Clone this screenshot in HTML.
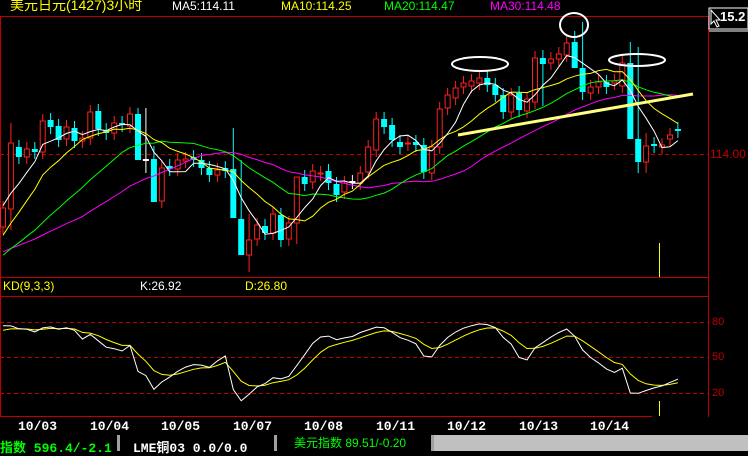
<!DOCTYPE html>
<html><head><meta charset="utf-8"><style>
html,body{margin:0;padding:0;background:#000;}
body{width:748px;height:451px;overflow:hidden;position:relative;font-family:"Liberation Sans","Noto Sans CJK SC",sans-serif;}
.t{position:absolute;font-size:11px;white-space:nowrap;line-height:13px;}
.d{position:absolute;top:419px;font:bold 13px "Liberation Mono",monospace;color:#fff;}
</style></head><body>
<svg id="s" width="748" height="451" style="position:absolute;left:0;top:0">
<rect x="0" y="0" width="748" height="451" fill="#000"/>
<line x1="0.5" y1="16" x2="0.5" y2="417" stroke="#c00000"/>
<line x1="0" y1="16.5" x2="708" y2="16.5" stroke="#c00000"/>
<line x1="708.5" y1="16" x2="708.5" y2="417" stroke="#c00000"/>
<line x1="0" y1="277.5" x2="708" y2="277.5" stroke="#c00000"/>
<line x1="0" y1="296.5" x2="708" y2="296.5" stroke="#c00000"/>
<line x1="0" y1="416.5" x2="652" y2="416.5" stroke="#c00000"/>
<line x1="0" y1="154.5" x2="708" y2="154.5" stroke="#c00000" stroke-dasharray="4,3"/>
<line x1="0" y1="322.5" x2="708" y2="322.5" stroke="#c00000" stroke-dasharray="4,3"/>
<line x1="0" y1="357.5" x2="708" y2="357.5" stroke="#c00000" stroke-dasharray="4,3"/>
<line x1="0" y1="393.5" x2="708" y2="393.5" stroke="#c00000" stroke-dasharray="4,3"/>
<rect x="659" y="243" width="1" height="34" fill="#ffff00"/>
<rect x="659" y="401" width="1" height="15" fill="#ffff00"/>
<g id="g"></g>
<line x1="458" y1="135" x2="693" y2="94" stroke="#ffff80" stroke-width="3"/>
<ellipse cx="480" cy="64" rx="28" ry="7" fill="none" stroke="#fff" stroke-width="2"/>
<ellipse cx="574" cy="25" rx="14" ry="12" fill="none" stroke="#fff" stroke-width="2"/>
<ellipse cx="637" cy="60" rx="28" ry="6" fill="none" stroke="#fff" stroke-width="2"/>
<rect x="709" y="8" width="39" height="21" fill="#000" stroke="#fff"/>
<line x1="709" y1="31" x2="748" y2="31" stroke="#fff"/>
<path d="M711 10 L711 24 L714 21 L717 27 L719 26 L716 20 L720 20 Z" fill="#000" stroke="#fff"/>
<rect x="0" y="435" width="748" height="16" fill="#000"/>
<rect x="117" y="435" width="3" height="16" fill="#a0a0a0"/>
<rect x="274" y="435" width="3" height="16" fill="#a0a0a0"/>
<rect x="431" y="435" width="3" height="16" fill="#a0a0a0"/>
<rect x="434" y="435" width="314" height="16" fill="#c0c0c0"/>
</svg>
<div class="t" style="left:10px;top:-3px;color:#ffff00;font-size:14px;line-height:16px">美元日元(1427)3小时</div>
<div class="t" style="left:172px;top:0px;color:#fff;font-size:12px">MA5:114.11</div>
<div class="t" style="left:281px;top:0px;color:#ffff00;font-size:12px">MA10:114.25</div>
<div class="t" style="left:384px;top:0px;color:#00ff00;font-size:12px">MA20:114.47</div>
<div class="t" style="left:490px;top:0px;color:#ff00ff;font-size:12px">MA30:114.48</div>
<div class="t" style="left:720px;top:10px;color:#fff;font-weight:bold;font-size:13px">15.2</div>
<div class="t" style="left:710px;top:148px;color:#c00000;font-size:12px">114.00</div>
<div class="t" style="left:712px;top:316px;color:#c00000">80</div>
<div class="t" style="left:712px;top:351px;color:#c00000">50</div>
<div class="t" style="left:712px;top:387px;color:#c00000">20</div>
<div class="t" style="left:3px;top:280px;color:#ffff00;font-size:12px">KD(9,3,3)</div>
<div class="t" style="left:140px;top:280px;color:#fff;font-size:12px">K:26.92</div>
<div class="t" style="left:245px;top:280px;color:#ffff00;font-size:12px">D:26.80</div>
<div class="d" style="left:18px">10/03</div>
<div class="d" style="left:90px">10/04</div>
<div class="d" style="left:161px">10/05</div>
<div class="d" style="left:233px">10/07</div>
<div class="d" style="left:304px">10/08</div>
<div class="d" style="left:376px">10/11</div>
<div class="d" style="left:447px">10/12</div>
<div class="d" style="left:519px">10/13</div>
<div class="d" style="left:590px">10/14</div>
<div class="t" style="left:0px;top:437px;color:#00ff00;font:bold 13px 'Liberation Mono','Noto Sans CJK SC',monospace">指数 596.4/-2.1</div>
<div class="t" style="left:133px;top:437px;color:#fff;font:bold 13px 'Liberation Mono','Noto Sans CJK SC',monospace">LME铜03  0.0/0.0</div>
<div class="t" style="left:294px;top:437px;color:#00ff00;font-size:12px">美元指数 89.51/-0.20</div>
<script>
var C=[['r',208,227],['r',143,209],['c',147,157],['r',149,157],['c',149,152],['r',121,152],['c',120,127],['c',126,140],['r',127,139],['c',128,141],['r',138,141],['r',112,138],['c',111,129],['c',130,133],['r',123,133],['c',123,125],['r',114,126],['c',114,160],['w',160,160],['c',159,202],['r',168,201],['c',166,169],['r',160,169],['r',159,161],['c',157,160],['c',160,168],['c',168,175],['r',170,175],['c',168,171],['c',169,218],['c',219,255],['r',240,255],['r',225,239],['c',226,233],['r',214,233],['c',215,240],['r',223,239],['r',177,223],['c',177,184],['r',171,182],['r',173,174],['c',171,183],['c',184,195],['r',183,192],['w',182,182],['r',173,183],['r',147,172],['r',119,150],['c',119,127],['c',125,140],['c',142,147],['r',143,144],['c',142,145],['c',145,172],['r',147,173],['r',109,147],['r',95,108],['r',88,98],['r',83,87],['r',81,86],['r',78,83],['c',78,85],['c',85,95],['c',95,112],['r',95,112],['c',93,110],['r',99,111],['r',58,102],['c',58,64],['r',59,63],['r',54,59],['r',43,55],['c',42,68],['c',68,92],['r',87,93],['r',82,87],['c',82,87],['r',81,83],['r',63,86],['c',63,139],['c',139,162],['r',146,162],['c',144,146],['r',145,147],['r',135,139],['c',129,131]];
var WK={1:[123,230],17:[108,128],18:[108,173],19:[146,186],29:[128,180],30:[160,228],31:[214,272],37:[200,244],72:[31,60],73:[22,100],80:[47,173],81:[133,173],79:[42,90],68:[50,106]};
var pre=[];for(var i=0;i<10;i++)pre.push(245);for(i=0;i<10;i++)pre.push(275);for(i=0;i<5;i++)pre.push(265);for(i=0;i<4;i++)pre.push(205);
var cl=[],hi=[],lo=[];
pre.forEach(function(v){cl.push(v);hi.push(v-6);lo.push(v+6);});
var g=document.getElementById('g'),out='';
C.forEach(function(c,i){
 var x=3+i*7.94,t=c[1],b=c[2],w=WK[i]||[t-7,b+7];
 cl.push(c[0]=='r'?t:b);hi.push(w[0]);lo.push(w[1]);
 var col=c[0]=='r'?'#ff2020':(c[0]=='c'?'#00ffff':'#ffffff');
 out+='<line x1="'+x.toFixed(1)+'" y1="'+w[0]+'" x2="'+x.toFixed(1)+'" y2="'+w[1]+'" stroke="'+col+'"/>';
 if(c[0]=='r')out+='<rect x="'+(x-2.5).toFixed(1)+'" y="'+t+'" width="5" height="'+Math.max(b-t,1)+'" fill="#000" stroke="'+col+'"/>';
 else if(c[0]=='c')out+='<rect x="'+(x-3).toFixed(1)+'" y="'+t+'" width="6" height="'+Math.max(b-t,2)+'" fill="'+col+'"/>';
 else out+='<line x1="'+(x-3).toFixed(1)+'" y1="'+t+'" x2="'+(x+3).toFixed(1)+'" y2="'+t+'" stroke="#fff" stroke-width="2"/>';
});
var P=pre.length;
function ma(n,col){var pts=[];for(var i=P;i<cl.length;i++){var s=0;for(var j=0;j<n;j++)s+=cl[i-j];pts.push((3+(i-P)*7.94).toFixed(1)+','+(s/n).toFixed(1));}
 out+='<polyline points="'+pts.join(' ')+'" fill="none" stroke="'+col+'"/>';}
ma(30,'#ff00ff');ma(20,'#00ff00');ma(10,'#ffff00');ma(5,'#ffffff');
var K=50,D=50,kp=[],dp=[];
function ky(v){return (416.7-(v*0.72+14)*1.183).toFixed(1);}
for(var i=0;i<cl.length;i++){var H=1e9,L=-1e9;for(var j=Math.max(0,i-8);j<=i;j++){H=Math.min(H,hi[j]);L=Math.max(L,lo[j]);}
 var r=L==H?50:(L-cl[i])/(L-H)*100;K=K*2/3+r/3;D=D*2/3+K/3;
 if(i>=P){var x=(3+(i-P)*7.94).toFixed(1);kp.push(x+','+ky(K));dp.push(x+','+ky(D));}}
out+='<polyline points="'+dp.join(' ')+'" fill="none" stroke="#ffff00"/>';
out+='<polyline points="'+kp.join(' ')+'" fill="none" stroke="#ffffff"/>';
g.innerHTML=out;
</script>
</body></html>
